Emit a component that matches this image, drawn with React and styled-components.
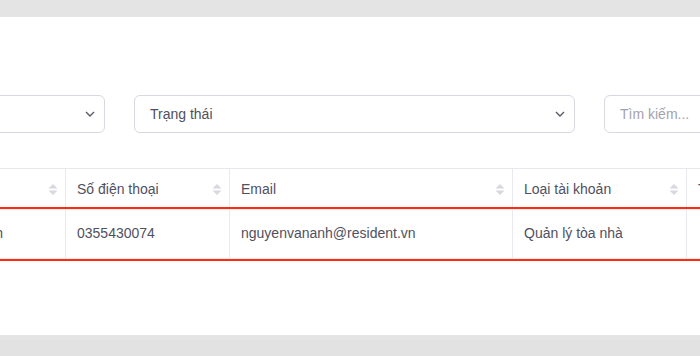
import React from "react";
import styled, { createGlobalStyle } from "styled-components";

const GlobalStyle = createGlobalStyle`
  body {
    margin: 0;
    background: #e4e4e4;
    font-family: "Liberation Sans", Arial, sans-serif;
  }
`;

const Screen = styled.div`
  width: 700px;
  height: 356px;
  padding-top: 17px;
  box-sizing: border-box;
  overflow: hidden;
  background: linear-gradient(#e4e4e4 0 340px, #e2e2e2 340px);
`;

const Panel = styled.div`
  height: 318px;
  background: #ffffff;
  overflow: hidden;
  padding-top: 78px;
  box-sizing: border-box;
`;

const Scroller = styled.div`
  margin-left: -336px;
  width: 1300px;
`;

const FilterRow = styled.div`
  display: flex;
  gap: 29px;
  height: 38px;
`;

const SelectBox = styled.div`
  width: ${(props) => props.width || "441px"};
  height: 38px;
  box-sizing: border-box;
  border: 1px solid #d8d8e0;
  border-radius: 6px;
  display: flex;
  align-items: center;
  justify-content: space-between;
  padding: 0 9px 0 15px;
  font-size: 14px;
  color: ${(props) => (props.placeholder ? "#a3a3ad" : "#4f4f5e")};
`;

const Table = styled.div`
  margin-top: 35px;
  border-top: 1px solid #e8e8ee;
`;

const Row = styled.div`
  display: grid;
  grid-template-columns: 223px 179px 164px 283px 174px 200px;
  height: ${(props) => props.height};
  box-sizing: border-box;
`;

const DataRow = styled(Row)`
  border-top: 1px solid #ececf1;
  border-bottom: 1px solid #ececf1;
  outline: 2px solid #ff2a12;
  position: relative;
`;

const HeadCell = styled.div`
  display: flex;
  align-items: center;
  justify-content: space-between;
  padding: 0 7px 0 11px;
  border-right: 1px solid #e8e8ee;
  font-size: 14px;
  color: #50505f;
  white-space: nowrap;
  overflow: hidden;
`;

const Cell = styled.div`
  display: flex;
  align-items: center;
  justify-content: ${(props) => (props.center ? "center" : "flex-start")};
  padding: 0 11px 3px;
  border-right: 1px solid #e8e8ee;
  font-size: 14px;
  color: #50505f;
  white-space: nowrap;
  overflow: hidden;
`;

const Chevron = () => (
  <svg width="10" height="6" viewBox="0 0 10 6">
    <path d="M1 1 L5 5 L9 1" fill="none" stroke="#5a5a68" strokeWidth="1.4" />
  </svg>
);

const SortIcon = () => (
  <svg width="10" height="13" viewBox="0 0 10 13">
    <path d="M0.5 5.5 L5 1 L9.5 5.5 Z" fill="#d8d8e0" />
    <path d="M0.5 7.5 L5 12 L9.5 7.5 Z" fill="#d8d8e0" />
  </svg>
);

const headers = ["Tên đăng nhập", "Họ và tên", "Số điện thoại", "Email", "Loại tài khoản", "Trạng thái"];

export default function App() {
  return (
    <>
      <GlobalStyle />
      <Screen>
        <Panel>
          <Scroller>
            <FilterRow>
              <SelectBox>
                <span>Tòa nhà</span>
                <Chevron />
              </SelectBox>
              <SelectBox>
                <span>Trạng thái</span>
                <Chevron />
              </SelectBox>
              <SelectBox width="260px" placeholder>
                <span>Tìm kiếm...</span>
              </SelectBox>
            </FilterRow>
            <Table>
              <Row height="40px">
                {headers.map((h) => (
                  <HeadCell key={h}>
                    <span>{h}</span>
                    <SortIcon />
                  </HeadCell>
                ))}
              </Row>
              <DataRow height="50px">
                <Cell>nguyenvananh</Cell>
                <Cell>Nguyễn Văn Anh</Cell>
                <Cell>0355430074</Cell>
                <Cell>nguyenvananh@resident.vn</Cell>
                <Cell>Quản lý tòa nhà</Cell>
                <Cell center>Hoạt động</Cell>
              </DataRow>
            </Table>
          </Scroller>
        </Panel>
      </Screen>
    </>
  );
}
